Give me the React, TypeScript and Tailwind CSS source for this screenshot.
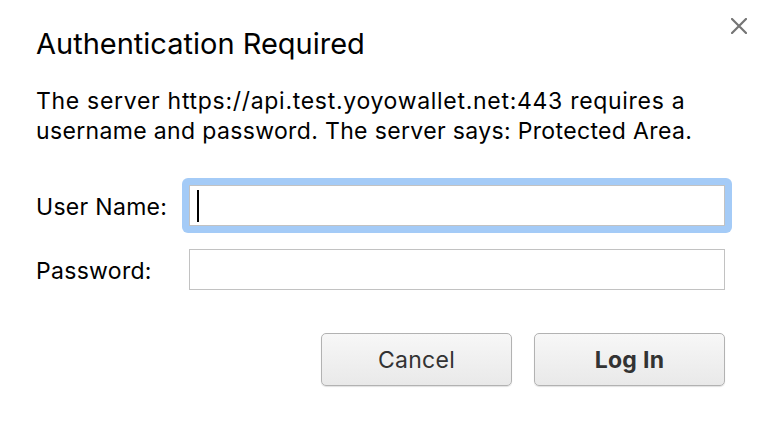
import React from "react";

function CloseIcon() {
  return (
    <svg width="16" height="16" viewBox="0 0 16 16" fill="none">
      <path d="M1 1 L15 15 M15 1 L1 15" stroke="#757575" strokeWidth="2.2" strokeLinecap="square" />
    </svg>
  );
}

export default function App() {
  return (
    <div className="relative w-[762px] h-[426px] bg-white text-black font-['Inter','Liberation_Sans',sans-serif]">
      <button className="absolute left-[730px] top-[17px] w-[17px] h-[17px] flex items-center justify-center" aria-label="Close">
        <CloseIcon />
      </button>

      <div className="pl-[36px] pr-[37px] pt-[25px]">
        <h1 className="text-[29px] leading-[37px] font-normal">Authentication Required</h1>

        <p className="mt-[24px] text-[23px] leading-[30px]">
          <span className="block tracking-[0.7px]">The server https://api.test.yoyowallet.net:443 requires a</span>
          <span className="block tracking-[0.35px]">username and password. The server says: Protected Area.</span>
        </p>

        <div className="mt-[39px] grid grid-cols-[153px_1fr] items-center gap-y-[23px] text-[23px] tracking-[0.3px]">
          <label htmlFor="user" className="pt-[3px]">User Name:</label>
          <div className="-m-[7px] rounded-[6px] bg-[#a4cbf7] p-[7px]">
            <div className="relative h-[41px] border border-[#c2c2c2] bg-white">
              <input id="user" className="h-full w-full px-[7px] outline-none" />
              <span className="absolute left-[7px] top-[4px] h-[32px] w-[2px] bg-black" />
            </div>
          </div>

          <label htmlFor="pass" className="pt-[3px]">Password:</label>
          <input id="pass" type="password" className="h-[41px] border border-[#c2c2c2] bg-white px-[7px] outline-none" />
        </div>

        <div className="mt-[43px] flex justify-end gap-[22px] text-[23px] tracking-[0.3px] text-[#333]">
          <button className="h-[53px] w-[191px] rounded-[5px] border border-[#b2b2b2] bg-gradient-to-b from-[#f7f7f7] to-[#e9e9e9] pt-[1px] shadow-[0_1px_1px_rgba(0,0,0,0.12)]">
            Cancel
          </button>
          <button className="h-[53px] w-[191px] rounded-[5px] border border-[#b2b2b2] bg-gradient-to-b from-[#f7f7f7] to-[#e9e9e9] pt-[1px] font-bold shadow-[0_1px_1px_rgba(0,0,0,0.12)]">
            Log In
          </button>
        </div>
      </div>
    </div>
  );
}
